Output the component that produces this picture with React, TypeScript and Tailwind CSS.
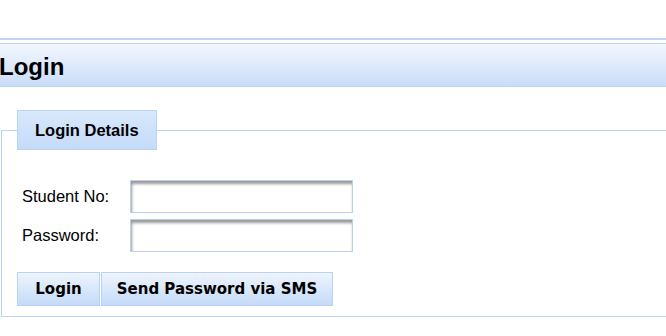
import React from "react";

const fields = [
  { label: "Student No:", type: "text" },
  { label: "Password:", type: "password" },
];

const App = () => {
  return (
    <div className="w-[666px] h-[336px] overflow-hidden bg-white font-['Liberation_Sans',Arial,sans-serif] text-black">
      <div className="h-[38px]" />
      <div className="h-[2px] bg-[#bfd5f3]" />
      <div className="h-[3px]" />

      <div className="h-[44px] border-t border-b border-t-[#c6d2e2] border-b-[#bdd5f3] bg-gradient-to-b from-[#f3f7fe] to-[#c9ddf8] flex items-center">
        <h1 className="text-[24px] font-bold leading-none pt-[4px] -ml-[1px]">Login</h1>
      </div>

      <fieldset className="mt-[23px] ml-[1px] w-[720px] border border-[#bcd4f3] pl-[15px] pb-[10px]">
        <legend className="h-[40px] px-[17px] border border-[#bad3f3] bg-gradient-to-b from-[#d9e8fc] to-[#c4dbf8] text-[16.5px] font-bold leading-[38px]">
          Login Details
        </legend>

        <div className="mt-[30px] flex flex-col gap-[6px]">
          {fields.map((field) => (
            <div key={field.label} className="flex items-center">
              <label className="w-[113px] pl-[5px] text-[16.5px]">{field.label}</label>
              <input
                type={field.type}
                className="w-[223px] h-[33px] border border-[#b8d0f0] bg-white shadow-[inset_1px_3px_3px_rgba(0,0,0,0.4)] outline-none"
              />
            </div>
          ))}
        </div>

        <div className="mt-[20px] flex gap-[1px] font-['DejaVu_Sans',Verdana,sans-serif] text-[15px] font-bold">
          <button className="w-[83px] h-[34px] border border-[#bad3f3] bg-gradient-to-b from-[#eef4fd] to-[#c4dbf8]">
            Login
          </button>
          <button className="w-[232px] h-[34px] border border-[#bad3f3] bg-gradient-to-b from-[#eef4fd] to-[#c4dbf8]">
            Send Password via SMS
          </button>
        </div>
      </fieldset>
    </div>
  );
};

export default App;
